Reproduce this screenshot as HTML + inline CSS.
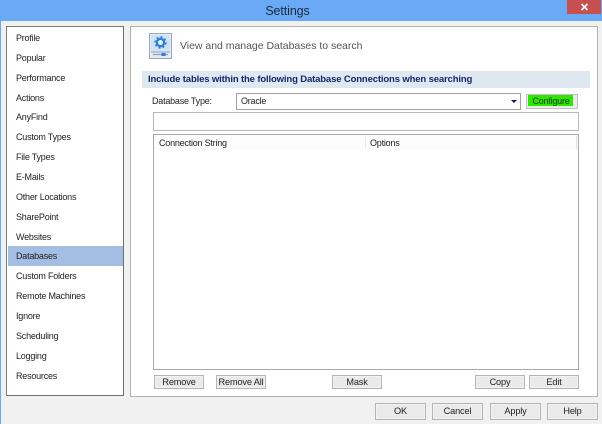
<!DOCTYPE html>
<html><head><meta charset="utf-8">
<style>
html,body{margin:0;padding:0;background:#f2f2f2}
#r{position:relative;width:602px;height:424px;overflow:hidden;background:#f1f1f1;font-family:"Liberation Sans",sans-serif;font-size:9px;color:#222}
#r div{position:absolute;box-sizing:border-box}
.t{white-space:nowrap;filter:blur(.35px);letter-spacing:-.22px}
.b{background:#eaeaea;border:1px solid #b4b4b4;text-align:center;line-height:13px;color:#222;font-size:9.2px;letter-spacing:-.15px;white-space:nowrap;box-shadow:inset 0 0 0 1px #f2f2f2}
.f{height:17px;line-height:15px}
.i{left:16px;width:100px;height:14px;line-height:14px}
</style></head><body>
<div id="r">
<div style="left:0;top:0;width:602px;height:21px;background:#69a9f6"></div>
<div style="left:0;top:21px;width:1px;height:403px;background:#69a9f6"></div>
<div class="t" style="left:0;top:4px;width:575px;text-align:center;font-size:12.5px;letter-spacing:-.1px;color:#1e2a3c;line-height:15px">Settings</div>
<div style="left:567px;top:0;width:34px;height:14px;background:#c65050"></div>
<svg style="position:absolute;left:580px;top:3px" width="9" height="8"><path d="M1.5 1L7.5 7M7.5 1L1.5 7" stroke="#fff" stroke-width="1.6"/></svg>

<div style="left:6px;top:26px;width:118px;height:370px;background:#fff;border:1px solid #666;border-width:1px 1.5px 1.5px 1.5px;border-color:#777 #6e6e6e #6e6e6e #808080"></div>
<div style="left:8px;top:246px;width:115px;height:20px;background:#a3bde3"></div>
<div class="t i" style="top:31px">Profile</div>
<div class="t i" style="top:51px">Popular</div>
<div class="t i" style="top:71px">Performance</div>
<div class="t i" style="top:91px">Actions</div>
<div class="t i" style="top:110px">AnyFind</div>
<div class="t i" style="top:130px">Custom Types</div>
<div class="t i" style="top:150px">File Types</div>
<div class="t i" style="top:170px">E-Mails</div>
<div class="t i" style="top:190px">Other Locations</div>
<div class="t i" style="top:210px">SharePoint</div>
<div class="t i" style="top:230px">Websites</div>
<div class="t i" style="top:249px">Databases</div>
<div class="t i" style="top:269px">Custom Folders</div>
<div class="t i" style="top:289px">Remote Machines</div>
<div class="t i" style="top:309px">Ignore</div>
<div class="t i" style="top:329px">Scheduling</div>
<div class="t i" style="top:349px">Logging</div>
<div class="t i" style="top:369px">Resources</div>

<div style="left:130px;top:26px;width:468px;height:371px;background:#fff;border:1px solid #b0b0b0"></div>

<svg style="position:absolute;left:149px;top:33px" width="23" height="26" viewBox="0 0 23 26">
<rect x=".5" y=".5" width="22" height="25" fill="#e4ebf3" stroke="#9aa8b8"/>
<rect x="2" y="2" width="19" height="15.500" fill="#cfe2f8"/>
<circle cx="11.500" cy="9.500" r="3.600" fill="#e9f3fd" stroke="#2d7fd8" stroke-width="2.200"/>
<circle cx="11.500" cy="9.500" r="5.400" fill="none" stroke="#2d7fd8" stroke-width="1.600" stroke-dasharray="2.100 2.100"/>
<path d="M2 19H21" stroke="#8b9db2"/>
<path d="M4 21.500H19" stroke="#8b9db2" stroke-width="1.200"/>
<rect x="12.500" y="20" width="4" height="3" fill="#2d7fd8"/>
</svg>
<div class="t" style="left:180px;top:39px;font-size:10.500px;letter-spacing:-.02px;line-height:14px;color:#555">View and manage Databases to search</div>

<div style="left:142px;top:71px;width:448px;height:17px;background:#dfe8f0"></div>
<div class="t" style="left:148px;top:73px;font-size:9.500px;letter-spacing:-.14px;line-height:14px;font-weight:bold;color:#16266b">Include tables within the following Database Connections when searching</div>

<div class="t" style="left:152px;top:95px;line-height:13px">Database Type:</div>
<div style="left:236px;top:93px;width:285px;height:17px;background:#fff;border:1px solid #a0a0a0"></div>
<div class="t" style="left:241px;top:95px;line-height:13px">Oracle</div>
<div style="left:511px;top:100px;width:0;height:0;border-left:3px solid transparent;border-right:3px solid transparent;border-top:3.500px solid #14145a"></div>
<div style="left:526px;top:94px;width:52px;height:15px;background:#ececec;border:1px solid #c0c0c0"></div>
<div style="left:528px;top:95px;width:45px;height:11px;background:#2fe600"></div>
<div class="t" style="left:528px;top:94px;width:46px;text-align:center;line-height:14px;color:#143a10">Configure</div>

<div style="left:153px;top:112px;width:426px;height:19px;background:#fff;border:1px solid #b8b8b8"></div>

<div style="left:153px;top:134px;width:426px;height:236px;background:#fff;border:1px solid #a8a8a8"></div>
<div style="left:154px;top:135px;width:424px;height:15px;background:#fcfcfc"></div>
<div style="left:365px;top:136px;width:1px;height:13px;background:#ececec"></div>
<div style="left:576px;top:136px;width:1px;height:13px;background:#e0e0e0"></div>
<div class="t" style="left:159px;top:137px;line-height:13px">Connection String</div>
<div class="t" style="left:370px;top:137px;line-height:13px">Options</div>

<div class="b" style="left:154px;top:375px;width:50px;height:14px">Remove</div>
<div class="b" style="left:216px;top:375px;width:50px;height:14px">Remove All</div>
<div class="b" style="left:332px;top:375px;width:50px;height:14px">Mask</div>
<div class="b" style="left:475px;top:375px;width:50px;height:14px">Copy</div>
<div class="b" style="left:529px;top:375px;width:50px;height:14px">Edit</div>

<div class="b f" style="left:375px;top:403px;width:51px">OK</div>
<div class="b f" style="left:432px;top:403px;width:51px">Cancel</div>
<div class="b f" style="left:490px;top:403px;width:51px">Apply</div>
<div class="b f" style="left:547px;top:403px;width:51px">Help</div>
</div>
</body></html>
